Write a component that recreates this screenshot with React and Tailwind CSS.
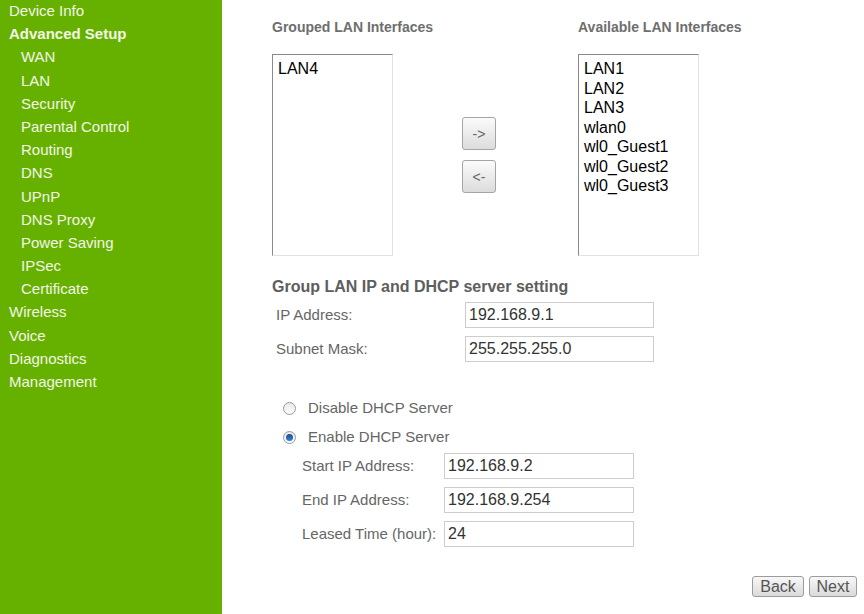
import React from "react";

const menu = [
  { label: "Device Info", level: 0 },
  { label: "Advanced Setup", level: 0, bold: true },
  { label: "WAN", level: 1 },
  { label: "LAN", level: 1 },
  { label: "Security", level: 1 },
  { label: "Parental Control", level: 1 },
  { label: "Routing", level: 1 },
  { label: "DNS", level: 1 },
  { label: "UPnP", level: 1 },
  { label: "DNS Proxy", level: 1 },
  { label: "Power Saving", level: 1 },
  { label: "IPSec", level: 1 },
  { label: "Certificate", level: 1 },
  { label: "Wireless", level: 0 },
  { label: "Voice", level: 0 },
  { label: "Diagnostics", level: 0 },
  { label: "Management", level: 0 },
];

const grouped = ["LAN4"];
const available = ["LAN1", "LAN2", "LAN3", "wlan0", "wl0_Guest1", "wl0_Guest2", "wl0_Guest3"];

const Sidebar = () => (
  <div className="w-[222px] shrink-0 bg-[#66b100] min-h-[614px]">
    <ul className="-mt-[1px]">
      {menu.map((item) => (
        <li
          key={item.label}
          className={
            "text-[15px] h-[23.2px] leading-[23.2px] text-[#f3f5e6] " +
            (item.level === 1 ? "pl-[21px] " : "pl-[9px] ") +
            (item.bold ? "font-bold text-[14.5px]" : "")
          }
        >
          {item.label}
        </li>
      ))}
    </ul>
  </div>
);

const ListBox = ({ items }) => (
  <div className="w-[121px] h-[202px] bg-white border border-t-[#8a8a8a] border-l-[#8a8a8a] border-r-[#e2e2e2] border-b-[#e2e2e2] px-[5px] pt-[4px]">
    {items.map((it) => (
      <div key={it} className="text-[16px] leading-[19.5px] text-black">
        {it}
      </div>
    ))}
  </div>
);

const ArrowButton = ({ children }) => (
  <button className="w-[34px] h-[33px] rounded-[3px] border border-[#a5a5a5] bg-gradient-to-b from-[#fbfbfb] to-[#dcdcdc] text-[14px] text-[#666] leading-none">
    {children}
  </button>
);

const TextInput = ({ value, width }) => (
  <div className={"h-[26px] border border-[#cdcdcd] bg-white flex items-center pl-[3px] text-[16px] text-[#333] " + width}>
    {value}
  </div>
);

const Radio = ({ checked, label }) => (
  <div className="flex items-center h-[20px] pl-[11px]">
    <span className="w-[13px] h-[13px] rounded-full border border-[#9a9a9a] bg-gradient-to-b from-[#e8e8e8] to-[#fdfdfd] flex items-center justify-center">
      {checked && <span className="w-[7px] h-[7px] rounded-full bg-gradient-to-b from-[#1b4f8a] to-[#2e86d8]" />}
    </span>
    <span className="ml-[12px] text-[15px] text-[#666]">{label}</span>
  </div>
);

const FieldRow = ({ label, value, labelClass, inputWidth }) => (
  <div className="flex items-center h-[26px]">
    <span className={"text-[15px] text-[#666] shrink-0 " + labelClass}>{label}</span>
    <TextInput value={value} width={inputWidth} />
  </div>
);

export default function App() {
  return (
    <div className="flex min-h-[614px] bg-white font-['Liberation_Sans',Arial,sans-serif]">
      <Sidebar />
      <div className="flex-1 pl-[50px] pr-[7px] pt-[19px] flex flex-col">
        <div className="flex h-[16px] items-center">
          <span className="w-[306px] text-[14px] font-bold text-[#6e6e6e]">Grouped LAN Interfaces</span>
          <span className="text-[14px] font-bold text-[#6e6e6e]">Available LAN Interfaces</span>
        </div>
        <div className="flex mt-[19px]">
          <ListBox items={grouped} />
          <div className="ml-[69px] mt-[63px] flex flex-col gap-[10px]">
            <ArrowButton>-&gt;</ArrowButton>
            <ArrowButton>&lt;-</ArrowButton>
          </div>
          <div className="ml-[82px]">
            <ListBox items={available} />
          </div>
        </div>

        <div className="mt-[22px] text-[16px] leading-[18px] font-bold text-[#5e5e5e]">
          Group LAN IP and DHCP server setting
        </div>
        <div className="mt-[6px] flex flex-col gap-[8px]">
          <FieldRow label="IP Address:" value="192.168.9.1" labelClass="ml-[4px] w-[189px]" inputWidth="w-[189px]" />
          <FieldRow label="Subnet Mask:" value="255.255.255.0" labelClass="ml-[4px] w-[189px]" inputWidth="w-[189px]" />
        </div>

        <div className="mt-[36px] flex flex-col gap-[9px]">
          <Radio label="Disable DHCP Server" />
          <Radio checked label="Enable DHCP Server" />
        </div>
        <div className="mt-[6px] flex flex-col gap-[8px]">
          <FieldRow label="Start IP Address:" value="192.168.9.2" labelClass="ml-[30px] w-[142px]" inputWidth="w-[190px]" />
          <FieldRow label="End IP Address:" value="192.168.9.254" labelClass="ml-[30px] w-[142px]" inputWidth="w-[190px]" />
          <FieldRow label="Leased Time (hour):" value="24" labelClass="ml-[30px] w-[142px]" inputWidth="w-[190px]" />
        </div>

        <div className="mt-[29px] flex justify-end gap-[5px]">
          <button className="h-[21px] w-[52px] rounded-[3px] border border-[#9c9c9c] bg-gradient-to-b from-[#f8f8f8] to-[#dadada] text-[16px] text-[#555] leading-none">
            Back
          </button>
          <button className="h-[21px] w-[48px] rounded-[3px] border border-[#9c9c9c] bg-gradient-to-b from-[#f8f8f8] to-[#dadada] text-[16px] text-[#555] leading-none">
            Next
          </button>
        </div>
      </div>
    </div>
  );
}
